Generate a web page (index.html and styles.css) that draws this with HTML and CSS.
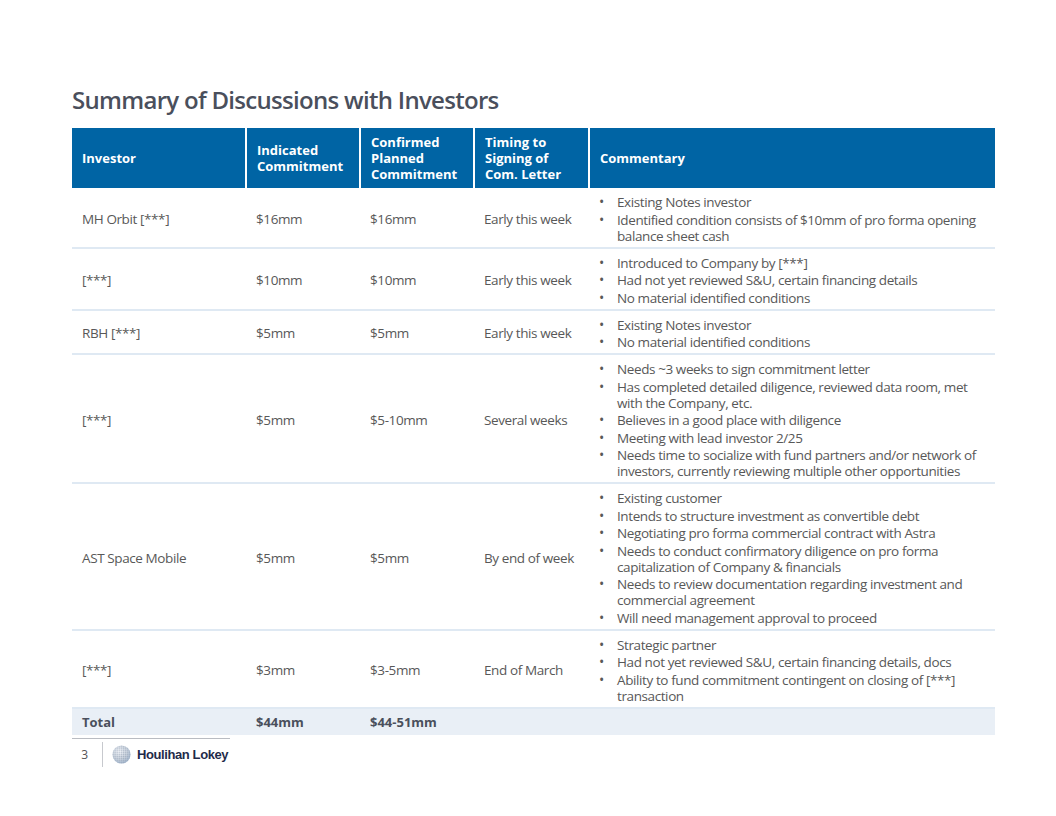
FILE: index.html
```html
<!DOCTYPE html>
<html>
<head>
<meta charset="utf-8">
<link rel="stylesheet" href="styles.css">
</head>
<body>
<div class="page">
  <h1 class="title">Summary of Discussions with Investors</h1>
  <table class="grid">
    <colgroup>
      <col class="c-inv"><col class="c-num"><col class="c-num"><col class="c-time"><col class="c-com">
    </colgroup>
    <thead>
      <tr>
        <th>Investor</th>
        <th>Indicated<br>Commitment</th>
        <th>Confirmed<br>Planned<br>Commitment</th>
        <th>Timing to<br>Signing of<br>Com. Letter</th>
        <th>Commentary</th>
      </tr>
    </thead>
    <tbody>
      <tr>
        <td>MH Orbit [***]</td><td>$16mm</td><td>$16mm</td><td>Early this week</td>
        <td><ul><li>Existing Notes investor</li><li>Identified condition consists of $10mm of pro forma opening balance sheet cash</li></ul></td>
      </tr>
      <tr>
        <td>[***]</td><td>$10mm</td><td>$10mm</td><td>Early this week</td>
        <td><ul><li>Introduced to Company by [***]</li><li>Had not yet reviewed S&amp;U, certain financing details</li><li>No material identified conditions</li></ul></td>
      </tr>
      <tr>
        <td>RBH [***]</td><td>$5mm</td><td>$5mm</td><td>Early this week</td>
        <td><ul><li>Existing Notes investor</li><li>No material identified conditions</li></ul></td>
      </tr>
      <tr>
        <td>[***]</td><td>$5mm</td><td>$5-10mm</td><td>Several weeks</td>
        <td><ul><li>Needs ~3 weeks to sign commitment letter</li><li>Has completed detailed diligence, reviewed data room, met with the Company, etc.</li><li>Believes in a good place with diligence</li><li>Meeting with lead investor 2/25</li><li>Needs time to socialize with fund partners and/or network of investors, currently reviewing multiple other opportunities</li></ul></td>
      </tr>
      <tr>
        <td>AST Space Mobile</td><td>$5mm</td><td>$5mm</td><td>By end of week</td>
        <td><ul><li>Existing customer</li><li>Intends to structure investment as convertible debt</li><li>Negotiating pro forma commercial contract with Astra</li><li>Needs to conduct confirmatory diligence on pro forma capitalization of Company &amp; financials</li><li>Needs to review documentation regarding investment and commercial agreement</li><li>Will need management approval to proceed</li></ul></td>
      </tr>
      <tr>
        <td>[***]</td><td>$3mm</td><td>$3-5mm</td><td>End of March</td>
        <td><ul><li>Strategic partner</li><li>Had not yet reviewed S&amp;U, certain financing details, docs</li><li>Ability to fund commitment contingent on closing of [***] transaction</li></ul></td>
      </tr>
      <tr class="total">
        <td>Total</td><td>$44mm</td><td>$44-51mm</td><td></td><td></td>
      </tr>
    </tbody>
  </table>
  <div class="footer">
    <span class="pagenum">3</span>
    <span class="sep"></span>
    <svg class="globe" width="19" height="19" viewBox="0 0 20 20">
      <defs>
        <radialGradient id="g" cx="0.4" cy="0.35" r="0.7">
          <stop offset="0" stop-color="#f4f6fa"/>
          <stop offset="0.6" stop-color="#c9d2de"/>
          <stop offset="1" stop-color="#9eb3cc"/>
        </radialGradient>
        <pattern id="d" width="2.2" height="2.2" patternUnits="userSpaceOnUse">
          <circle cx="1.1" cy="1.1" r="0.7" fill="#8f9db0"/>
        </pattern>
      </defs>
      <circle cx="10" cy="10" r="9.5" fill="url(#g)"/>
      <circle cx="10" cy="10" r="9.5" fill="url(#d)" opacity="0.6"/>
    </svg>
    <span class="brand">Houlihan Lokey</span>
  </div>
</div>
</body>
</html>
```
FILE: styles.css
```css
html, body {
  margin: 0;
  padding: 0;
  background: #ffffff;
}
.page {
  width: 1056px;
  height: 816px;
  padding: 86px 0 0 72px;
  box-sizing: border-box;
  font-family: "Open Sans", "Noto Sans", sans-serif;
}
.title {
  margin: 0 0 14px 0;
  font-size: 24px;
  line-height: 28px;
  font-weight: 600;
  color: #4a4f5c;
  letter-spacing: -0.7px;
}
.grid {
  width: 923px;
  border-collapse: collapse;
  table-layout: fixed;
  font-size: 13.5px;
  line-height: 16px;
  letter-spacing: -0.4px;
  color: #585858;
}
.c-inv { width: 174px; }
.c-num { width: 114px; }
.c-time { width: 115px; }
.c-com { width: 406px; }
.grid th {
  background: #0064a4;
  color: #ffffff;
  font-weight: 700;
  font-size: 13px;
  letter-spacing: 0;
  text-align: left;
  vertical-align: middle;
  padding: 6px 10px;
  height: 48px;
  border-left: 2px solid #ffffff;
}
.grid th:first-child { border-left: none; }
.grid td {
  padding: 6px 10px 3px 10px;
  vertical-align: middle;
  border-bottom: 2px solid #dfe9f3;
}
.grid ul {
  margin: 0;
  padding: 0;
  list-style: none;
}
.grid li {
  position: relative;
  padding-left: 18px;
}
.grid li + li { margin-top: 1.5px; }
.grid li::before {
  content: "\2022";
  position: absolute;
  left: 0;
  top: 0;
  font-size: 14px;
}
.grid tr.total td {
  background: #e9eff6;
  font-weight: 700;
  font-size: 13px;
  letter-spacing: 0;
  color: #4a4f5c;
  padding: 5px 10px;
  border-bottom: none;
}
.footer {
  margin-top: 3px;
  width: 158px;
  border-top: 1px solid #b9bcc2;
  display: flex;
  align-items: center;
  padding-top: 3px;
  height: 26px;
  white-space: nowrap;
}
.pagenum {
  width: 16px;
  text-align: right;
  font-size: 12px;
  color: #555;
}
.sep {
  width: 1px;
  height: 25px;
  background: #c7c9ce;
  margin: 0 9px 0 14px;
}
.globe { margin-right: 6px; flex: none; }
.brand {
  font-family: "Liberation Sans", Arial, sans-serif;
  font-size: 13px;
  font-weight: 700;
  color: #1f2b4a;
  letter-spacing: -0.4px;
}
```
